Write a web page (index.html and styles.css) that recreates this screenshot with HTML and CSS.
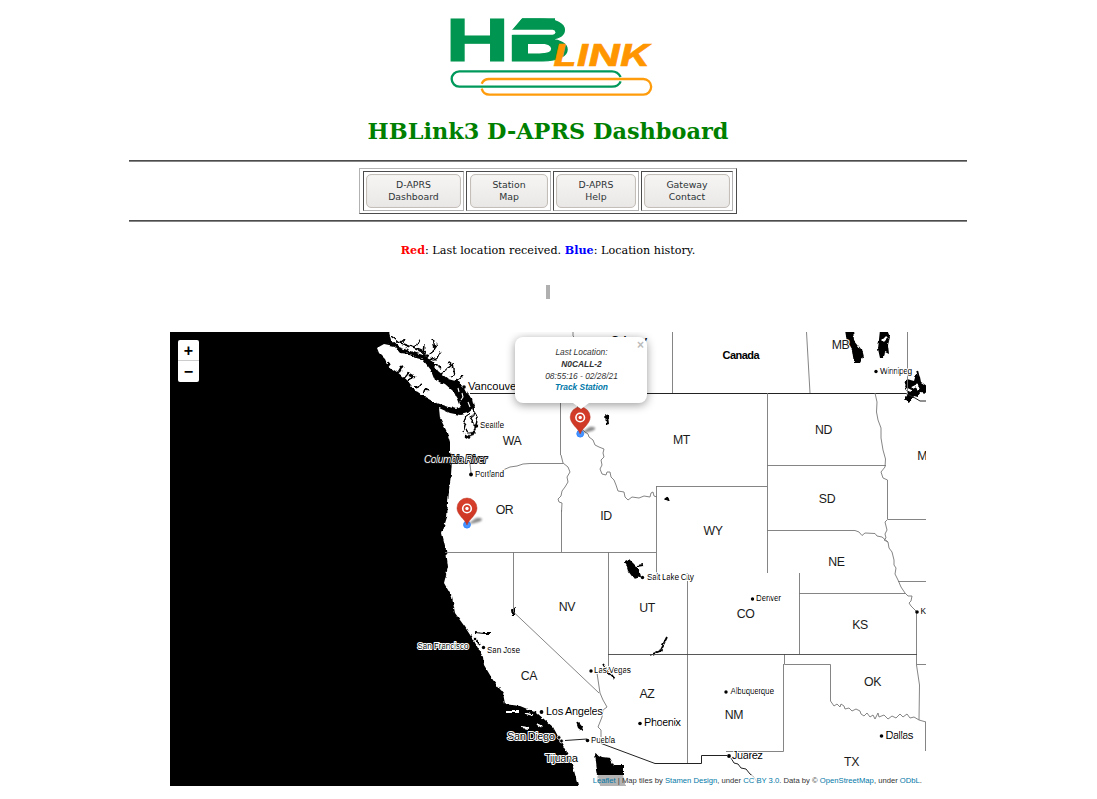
FILE: index.html
```html
<!DOCTYPE html>
<html lang="en">
<head>
<meta charset="utf-8">
<title>HBLink3 D-APRS Dashboard</title>
<link rel="stylesheet" href="styles.css">
</head>
<body>
<main class="page">
  <svg class="logo" viewBox="0 0 660 288" role="img" aria-label="HBLink">
    <g class="logo-hb">
      <text transform="translate(17 159) scale(1.46 1)" x="0" y="0" font-size="174">H</text>
      <text transform="translate(199 159) scale(1.68 1)" x="0" y="0" font-size="174">B</text>
    </g>
    <path fill="#fff" d="M208 25H251L218 66V80H208Z"/>
    <path fill="#009550" d="M247 31H345V108H218V64Z"/>
    <path fill="#fff" d="M212 65H338Q346 66 346 72.500Q346 79 338 80H212Z"/>
    <text class="logo-link" x="340" y="174" textLength="290" lengthAdjust="spacingAndGlyphs">LINK</text>
    <g fill="none" stroke-width="7">
      <path stroke="#00995c" d="M542 207C536 196 528 190 516 190H58a23 23 0 0 0 0 46H516C530 236 538 230 542 220"/>
      <path stroke="#ff9c0c" d="M125 227C129 218 137 213 148 213H610a23 23 0 0 1 0 47H148C136 260 128 252 125 242"/>
    </g>
  </svg>
  <h1 class="title">HBLink3 D-APRS Dashboard</h1>
  <div class="rule"></div>
  <nav class="menu">
    <div class="cell c1"><a class="button">D-APRS<br>Dashboard</a></div>
    <div class="cell c2"><a class="button">Station<br>Map</a></div>
    <div class="cell c3"><a class="button">D-APRS<br>Help</a></div>
    <div class="cell c4"><a class="button">Gateway<br>Contact</a></div>
  </nav>
  <div class="rule"></div>
  <p class="legend"><b class="red">Red</b>: Last location received. <b class="blue">Blue</b>: Location history.</p>
  <div class="stub"></div>
  <section class="map">
    <svg class="tiles" viewBox="170 332 756 454">
      <defs>
        <filter id="rough" x="-5%" y="-5%" width="110%" height="110%">
          <feTurbulence type="fractalNoise" baseFrequency=".2" numOctaves="2" seed="4"/>
          <feDisplacementMap in="SourceGraphic" scale="3.6" xChannelSelector="R" yChannelSelector="G"/>
        </filter>
        <filter id="craggy" x="-5%" y="-5%" width="110%" height="110%">
          <feTurbulence type="fractalNoise" baseFrequency=".13" numOctaves="2" seed="9"/>
          <feDisplacementMap in="SourceGraphic" scale="8" xChannelSelector="R" yChannelSelector="G"/>
        </filter>
        <filter id="soft" x="-50%" y="-50%" width="200%" height="200%"><feGaussianBlur stdDeviation="1.1"/></filter>
        <linearGradient id="pinfill" x1="0" x2="0" y1="0" y2="1"><stop offset="0" stop-color="#d8402c"/><stop offset="1" stop-color="#cb3522"/></linearGradient>
        <g id="pin">
          <path d="M1-1L9-7Q15-8 15-5Q12-2 1-1Z" fill="#000" opacity=".45" filter="url(#soft)"/>
          <circle cx="0" cy="-.3" r="3.4" fill="#3388ff" fill-opacity=".9" stroke="#3388ff"/>
          <path d="M0 0C-2-6-10-10-10-17A10 10 0 0 1 10-17C10-10 2-6 0 0Z" fill="url(#pinfill)" stroke="#b9301f" stroke-width=".5"/>
          <circle cx="0" cy="-16.500" r="4.300" fill="none" stroke="#fff" stroke-width="1.600"/>
          <circle cx="0" cy="-16.500" r="1.700" fill="#fff"/>
        </g>
      </defs>
      <rect x="170" y="332" width="756" height="454" fill="#fff"/>

      <!-- Pacific Ocean, Vancouver Island and Puget Sound -->
      <g filter="url(#rough)">
        <path d="M160 320H387L389 332L391 340L399 347L410 351L423 355L433 362L438 371L448 379L459 382L466 391L472 399L474 408L468 413L460 415L450 413L439 408L440 418L447 432L450 442L450 452L452 459L451 475L449 490L447 517L442 533L446 550L448 567L444 583L452 597L455 613L465 627L474 641L483 657L484 665L493 680L503 693L505 704L520 706L537 713L553 727L560 740L567 753L573 767L581 796H160Z"/>
        <path d="M377 348L384 344L394 346L400 353L410 354L423 360L431 370L435 380L445 384L453 391L458 399L461 407L456 409L446 406L434 402L425 397L415 390L407 380L397 372L388 366L385 359L379 353Z" fill="#fff"/>
        <path d="M595 753L602 757L610 758L614 765L623 765L623 775L628 796H602L597 770Z"/>
        <path d="M506 712H519M525 713L532 715M521 727L529 728M537 724L542 727" stroke="#fff" stroke-width="1.8" fill="none"/>
      </g>
      <g class="inlet" filter="url(#craggy)">
        <path d="M391 336L400 343L406 338M400 343L414 348L418 341M414 348L424 352L425 344M420 352L429 356L434 348L432 340M434 348L437 344M424 358L436 360L442 354L441 349M433 364L441 368M443 372L449 369L453 366M449 378L455 374L453 363M456 381L462 376M452 366L448 363M405 353L416 357L425 359"/>
        <path d="M390 367L388 362M398 373L402 366M404 378L409 372M408 384L414 377L410 375M416 389L421 383M422 394L428 390" stroke-width="2"/>
        <path d="M472 401L474 411L471 422L476 427L470 434L466 430M474 412L478 418L474 431L469 438L465 436M469 412L465 426L463 434M466 396L459 389M460 396L455 391M464 404L461 396"/>
      </g>
      <path class="isle" d="M462 393L463 397L461 400M468 402L470 407M472 410L471 414M465 389L467 393M458 388L459 392"/>

      <!-- Lakes and reservoirs -->
      <g filter="url(#rough)">
        <path d="M845 330H853L854 340L861 349L863 357L860 363L854 363L852 350L847 342ZM880 330H887L890 337L888 345L889 354L885 352L884 358L880 358L878 349Z"/>
        <path d="M907 379L914 381L916 374L920 377L921 382L927 386V393L920 392L918 397L914 396L910 403L904 400L908 394L905 386ZM605 414L608 416L609 424L606 425ZM664 499L668 496L670 502L665 500ZM625 561L629 559L633 563L636 566L640 572L641 577L634 579L628 571ZM511 610L515 608L515 616L512 616ZM576 722L583 726L582 731L578 728Z"/>
        <path d="M912 388L916 386L919 389M907 389L911 391M883 341L887 337" stroke="#fff" stroke-width="2.5" fill="none"/>
        <path d="M917 370L919 378M637 566L643 565M650 655L660 651L667 637M475 632L484 633L490 633M475 638L480 645M603 664L609 673L614 679" fill="none" stroke="#000" stroke-width="1.8"/>
      </g>

      <!-- Borders -->
      <g class="border">
        <path class="nation" d="M470 393.5H906L915 398L920 401H926M565 740.5L587 739M600 743L655 763.5H701.5V755.500H727M731 758L734 763L738 764L741 768L746 769L750 774L754 777"/>
        <path d="M573 332V336L577 340M672.500 332V393M806.500 332L810 393M907.500 332V393M767.500 393V573M767 465.500H886M656 486.500H767M656.500 486V573M799.500 573V654M687.500 573V763M608.500 552V670M513.500 552V612M445 552.500H656M784.500 654V664.500H830.500V701M783.500 664V751.500H726M560.500 393V455M561.500 510V552M767 530.500H855M799 593.500H905M898 581.500H926M887.500 480V519.500H926M916.500 612V665M917 664.500H926M925.500 722V751M513.500 612L599 693M577.500 393V425L585 432"/>
        <path stroke="#444" d="M608 654.500H917"/>
        <path d="M585 432L588 434L589 437L593 440L595 445L599 447L604 449L603 453L604 457L601 460L602 465L600 469L602 474L606 475L607 472L610 472L611 477L614 480L616 485L618 491L624 492L625 497L628 500L632 497L639 498L644 496L650 497L651 493L653 492L654 496L657 497M561 455L563 463L568 467L570 472L567 477L568 482L565 487L562 491L561 496L558 499L559 502L562 503L561.500 512M503 470L510 467L517 466L523 464L530 463.500H563M470 464L471 473M875 393L877 402L876.500 412L878 420L881 428L881 438L883 450L885.500 459L885 467L881 472L883 478L887.500 480M887 520L885 522L887 530L885 534L886 538L884 540L888 542L889 548L892 552L894 560L894 565L896 568L895 574L898 580L901 587L905 593L908 596L912 596L911 601L909 603L911 606L914 609L917 612M855 530.500L859 532L862 535.500L865 533L875 533.500L877 536L882 537L888 542M830.500 701L834 706L837 704L840 707L841 704L844 706L845 709L849 708L852 711L856 709L860 711L861 714L864 716L867 713L870 717L873 715L875 719L878 713L879 717L884 715L888 719L892 716L896 718L900 714L903 717L907 714L910 718L914 717L919 720L926 722M916.500 665L919.500 685L919 720M597 673L600 693L603 700L607 707L603 710L602 717L598 727L601 730L601 737L600 743M754 777L758 784"/>
      </g>

      <!-- State and province names -->
      <g class="state">
        <text x="512" y="445">WA</text><text x="681.500" y="444">MT</text><text x="823.500" y="434">ND</text>
        <text x="827" y="503">SD</text><text x="504.500" y="514">OR</text><text x="606" y="520">ID</text>
        <text x="713" y="535">WY</text><text x="836.500" y="566">NE</text><text x="567" y="611">NV</text>
        <text x="647" y="611.500">UT</text><text x="745.500" y="618">CO</text><text x="860" y="629">KS</text>
        <text x="529" y="679.500">CA</text><text x="647" y="698">AZ</text><text x="734" y="719">NM</text>
        <text x="872.500" y="686">OK</text><text x="851.500" y="766">TX</text><text x="840.500" y="349">MB</text>
        <text x="926.500" y="460">MN</text>
      </g>
      <text class="country" x="741" y="359" textLength="37">Canada</text>
      <text class="country" x="629" y="344" textLength="36">Calgary</text>

      <!-- Cities -->
      <g class="city">
        <text x="880" y="373.500" textLength="32">Winnipeg</text><text x="480" y="428" textLength="24">Seattle</text>
        <text x="475" y="476.500" textLength="29">Portland</text><text x="647" y="579.500" textLength="47">Salt Lake City</text>
        <text x="756" y="600.500" textLength="25">Denver</text><text x="920.500" y="613.500">Kansas City</text>
        <text x="487" y="653" textLength="33">San Jose</text><text x="594" y="673" textLength="37">Las Vegas</text>
        <text x="730.500" y="694" textLength="43.500">Albuquerque</text><text x="591" y="742.500" textLength="24">Puebla</text>
        <text x="417.500" y="649" textLength="51">San Francisco</text>
      </g>
      <g class="city big">
        <text x="468" y="389.500" textLength="52">Vancouver</text><text x="546" y="714.500" textLength="57">Los Angeles</text>
        <text x="507" y="740" textLength="48">San Diego</text><text x="545" y="762" textLength="33">Tijuana</text>
        <text x="644" y="726" textLength="37">Phoenix</text><text x="732" y="759" textLength="31">Juarez</text>
        <text x="885.500" y="739" textLength="28">Dallas</text>
      </g>
      <text class="river" x="424" y="462.500" textLength="63">Columbia River</text>
      <g>
        <circle cx="464" cy="387" r="1.800"/><circle cx="476.500" cy="426" r="1.700"/><circle cx="471" cy="474.500" r="1.900"/>
        <circle cx="876" cy="371.500" r="1.700"/><circle cx="642.500" cy="577.500" r="1.700"/><circle cx="752.500" cy="599" r="1.700"/>
        <circle cx="917" cy="612" r="1.800"/><circle cx="475" cy="639" r="1.700" stroke="#fff" stroke-width=".8"/><circle cx="483.500" cy="647.500" r="1.700"/>
        <circle cx="591" cy="671" r="1.700"/><circle cx="726" cy="692" r="1.700"/><circle cx="541.500" cy="712" r="1.900"/>
        <circle cx="640" cy="723.500" r="1.800"/><circle cx="587.500" cy="740.500" r="1.800"/><circle cx="559" cy="737.500" r="1.900" stroke="#fff" stroke-width=".8"/>
        <circle cx="561.500" cy="741" r="1.900" stroke="#fff" stroke-width=".8"/><circle cx="729" cy="756" r="1.900"/><circle cx="881.500" cy="736" r="1.800"/>
      </g>
      <use href="#pin" x="580.200" y="434"/>
      <use href="#pin" x="467" y="525"/>
    </svg>
    <div class="zoom"><span>+</span><span>−</span></div>
    <div class="popup">
      <span class="close">×</span>
      <span>Last Location:</span>
      <b>N0CALL-2</b>
      <span>08:55:16 - 02/28/21</span>
      <b class="link">Track Station</b>
    </div>
    <div class="credit"><a>Leaflet</a> | Map tiles by <a>Stamen Design</a>, under <a>CC BY 3.0</a>. Data by © <a>OpenStreetMap</a>, under <a>ODbL</a>.</div>
  </section>
</main>
</body>
</html>
```
FILE: styles.css
```css
body { margin: 0; background: #fff; color: #000; font-family: "DejaVu Serif", serif; }
.page { width: 838px; height: 799px; margin-left: 129px; padding-top: 8px; box-sizing: border-box; display: flex; flex-direction: column; align-items: center; overflow: hidden; }
.logo { width: 220px; height: 96px; margin-left: 4px; display: block; flex: none; overflow: visible; }
.logo-hb { font-family: Inter, sans-serif; font-weight: 700; fill: #009550; stroke: #009550; stroke-width: 3; }
.logo-link { font: italic 700 90px Inter, sans-serif; fill: #ff9600; stroke: #ff9600; stroke-width: 1.5; }
.title { margin: 14px 0 0; height: 42px; line-height: 26px; font-size: 22.4px; color: #008000; white-space: nowrap; }
.rule { width: 838px; height: 2px; box-sizing: border-box; border-top: 1px solid #4c4c4c; border-bottom: 1px solid #858585; flex: none; }
.menu { display: flex; gap: 2px; margin: 6px 0; width: 378px; height: 46px; box-sizing: border-box; padding: 2px 3px; border: 1px solid; border-color: #b2b2b2 #4c4c4c #4c4c4c #b2b2b2; flex: none; }
.cell { height: 40px; box-sizing: border-box; border: 1px solid; border-color: #4c4c4c #b2b2b2 #b2b2b2 #4c4c4c; padding: 2px; }
.c1 { width: 101px; }
.c2 { width: 85px; padding: 2px 2px 2px 3px; }
.c3 { width: 86px; }
.c4 { width: 92px; }
.button { display: block; height: 34px; box-sizing: border-box; border: 1px solid #c4beb8; border-radius: 5px; background: linear-gradient(#f6f5f4, #eae8e7); box-shadow: inset 0 0 1px #d5d0cc; color: #2e3436; text-align: center; padding-top: 4px; font: 9.33px/12px "DejaVu Sans", sans-serif; }
.legend { margin: 20px 0 0; height: 43px; font-size: 11.2px; line-height: 17px; white-space: nowrap; }
.red { color: #f00; }
.blue { color: #00f; }
.stub { width: 4px; height: 14px; background: #b0b0b0; margin-bottom: 33px; flex: none; }
.map { position: relative; width: 756px; height: 454px; overflow: hidden; flex: none; font-family: "Liberation Sans", sans-serif; }
.tiles { display: block; width: 756px; height: 454px; }
.inlet { fill: none; stroke: #000; stroke-width: 1.5; }
.isle { fill: none; stroke: #fff; stroke-width: 1.1; }
.border { fill: none; stroke: #777; stroke-width: .9; }
.nation { stroke: #222; stroke-width: 1; }
.state { font-size: 12.3px; letter-spacing: -.4px; text-anchor: middle; fill: #1a1a1a; stroke: #fff; stroke-width: 2px; paint-order: stroke; }
.country { font-size: 11px; font-weight: bold; text-anchor: middle; }
.city { font-size: 8.3px; fill: #000; stroke: #fff; stroke-width: 2px; stroke-linejoin: round; paint-order: stroke; }
.big { font-size: 11.3px; }
.river { font-size: 10.3px; font-style: italic; fill: #fff; stroke: #111; stroke-width: 1.8px; paint-order: stroke; }
.zoom { position: absolute; left: 8px; top: 8px; width: 21px; border-radius: 2px; background: #fff; }
.zoom span { display: block; height: 21px; box-sizing: border-box; text-align: center; font: bold 16px/22px "Liberation Sans", sans-serif; }
.zoom span:first-child { border-bottom: 1px solid #ccc; }
.popup { position: absolute; left: 345px; top: 5px; width: 132px; height: 66px; box-sizing: border-box; padding: 10px 0 0 1px; border-radius: 8px; background: #fff; box-shadow: 0 2px 10px rgba(0,0,0,.4); color: #333; display: flex; flex-direction: column; align-items: center; font-size: 8.4px; line-height: 11.8px; font-style: italic; }
.popup::after { content: ""; position: absolute; left: 58px; top: 66px; border: 8px solid transparent; border-top: 6px solid #fff; border-bottom: 0; }
.popup .link { color: #0078a8; }
.close { position: absolute; right: 3px; top: 2px; color: #bbb; font: bold 12px/12px "Liberation Sans", sans-serif; }
.credit { position: absolute; right: 0; bottom: 0; height: 11px; line-height: 11px; padding: 0 4px; background: rgba(255,255,255,.7); color: #333; font-size: 7.66px; white-space: nowrap; }
.credit a { color: #0078a8; }
```
